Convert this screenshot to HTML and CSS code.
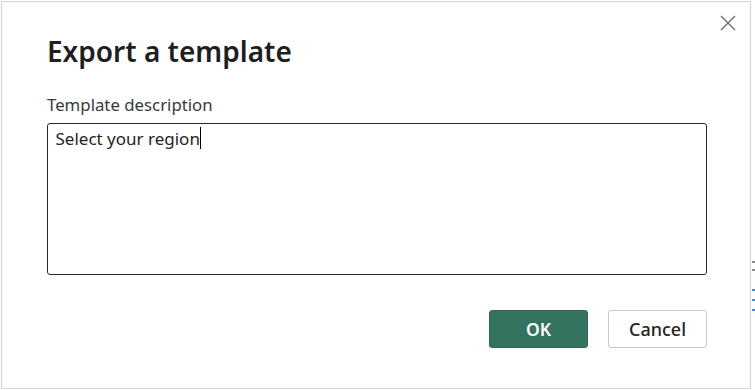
FILE: index.html
```html
<!DOCTYPE html>
<html lang="en">
<head>
<meta charset="utf-8">
<title>Export a template</title>
<link rel="stylesheet" href="styles.css">
</head>
<body>
<div class="dialog">
  <div class="top-row">
    <button class="close" aria-label="Close">
      <svg width="16" height="16" viewBox="0 0 16 16"><path d="M1 1 L15 15 M15 1 L1 15" stroke="#6b6b6b" stroke-width="1.4" fill="none"/></svg>
    </button>
  </div>
  <h1 class="title">Export a template</h1>
  <label class="label">Template description</label>
  <div class="textbox"><span class="value">Select your region</span><span class="caret"></span></div>
  <div class="actions">
    <button class="btn btn-primary">OK</button>
    <button class="btn btn-secondary">Cancel</button>
  </div>
</div>
<div class="edge">
  <span class="mark mark-gray"></span>
  <span class="mark mark-gray"></span>
  <span class="mark mark-blue mark-gap"></span>
  <span class="mark mark-blue"></span>
  <span class="mark mark-blue"></span>
</div>
</body>
</html>
```
FILE: styles.css
```css
html, body {
  margin: 0;
  padding: 0;
  background: #ffffff;
  width: 755px;
  height: 390px;
  overflow: hidden;
}
body {
  display: flex;
  align-items: flex-start;
  font-family: "Noto Sans", "Open Sans", sans-serif;
  color: #252423;
}
.dialog {
  box-sizing: border-box;
  margin: 1px 0 0 1px;
  width: 751px;
  height: 388px;
  border: 1px solid #d2d2d2;
  background: #fff;
  display: flex;
  flex-direction: column;
  padding: 0 43px 0 45px;
}
.top-row {
  display: flex;
  justify-content: flex-end;
  height: 31px;
  margin-right: -29px;
  padding-top: 13px;
  box-sizing: border-box;
}
.close {
  width: 16px;
  height: 16px;
  border: 0;
  padding: 0;
  background: none;
  display: flex;
}
.title {
  margin: 0;
  font-size: 28px;
  font-weight: 600;
  line-height: 36px;
  color: #201f1e;
}
.label {
  margin-top: 26px;
  font-size: 16.8px;
  line-height: 20px;
  color: #3b3a39;
}
.textbox {
  box-sizing: border-box;
  height: 152px;
  margin-top: 8px;
  border: 1.5px solid #2a2a2a;
  border-radius: 3px;
  padding: 3px 7.5px;
  font-size: 17px;
  line-height: 24px;
  display: flex;
  align-items: flex-start;
}
.value { color: #252423; }
.caret {
  display: inline-block;
  width: 1px;
  height: 22px;
  background: #000;
}
.actions {
  display: flex;
  justify-content: flex-end;
  gap: 20px;
  margin-top: 35px;
}
.btn {
  box-sizing: border-box;
  width: 99px;
  height: 38px;
  border-radius: 3px;
  font-family: "Noto Sans", "Open Sans", sans-serif;
  font-size: 17.5px;
  font-weight: 600;
  padding: 0;
}
.btn-primary {
  background: #33735f;
  border: 1px solid #2e6b58;
  color: #fff;
}
.btn-secondary {
  background: #fff;
  border: 1px solid #c8c8c8;
  color: #252423;
  font-size: 18px;
  font-weight: 500;
}
.edge {
  display: flex;
  flex-direction: column;
  margin-top: 261px;
  margin-left: 1px;
  gap: 6px;
}
.mark {
  display: block;
  width: 3px;
  height: 2px;
}
.mark-gap { margin-top: 12px; }
.mark-gray { background: #8a8a8a; }
.mark-blue { background: #4a86c8; }
.mark-blue + .mark-blue { margin-top: 2px; }
```
